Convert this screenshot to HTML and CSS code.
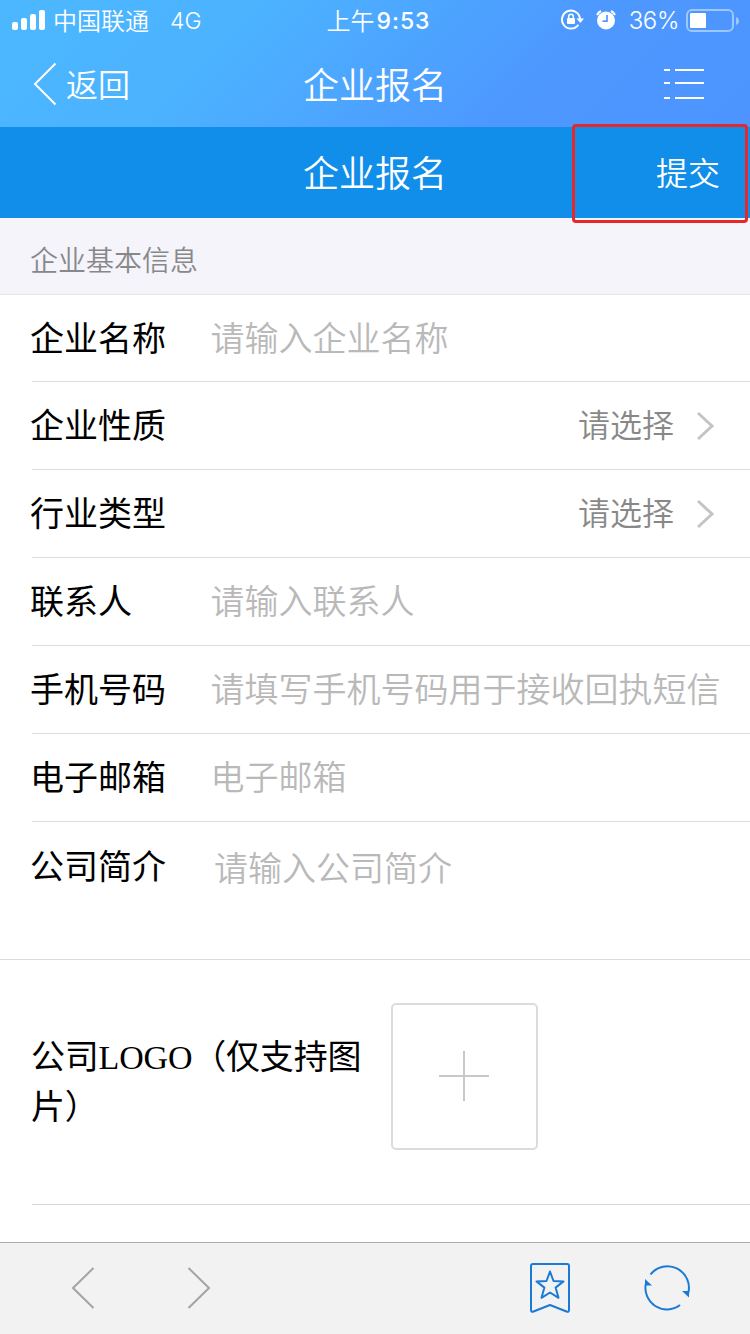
FILE: index.html
```html
<!DOCTYPE html>
<html lang="zh-CN">
<head>
<meta charset="utf-8">
<title>企业报名</title>
<link rel="stylesheet" href="styles.css">
</head>
<body>
<div class="screen">
  <header class="top">
    <div class="status">
      <div class="status-left">
        <svg class="signal" width="34" height="22" viewBox="0 0 34 22" fill="#fff"><rect x="0" y="12" width="6" height="8" rx="2"/><rect x="9" y="8" width="6" height="12" rx="2"/><rect x="18" y="4" width="6" height="16" rx="2"/><rect x="27" y="0" width="6" height="20" rx="2"/></svg>
        <span class="carrier">中国联通</span>
        <span class="network">4G</span>
      </div>
      <div class="clock"><span class="period">上午</span><span class="digits">9:53</span></div>
      <div class="status-right">
        <svg class="lock" width="24" height="22" viewBox="0 0 24 22" fill="none" stroke="#fff"><path d="M17.400 15.700A9 9 0 1 1 19 10.500" stroke-width="2"/><path d="M15.500 9.500h7.500l-3.700 4.500z" fill="#fff" stroke="none"/><rect x="6" y="9" width="8" height="6" rx="1" fill="#fff" stroke="none"/><path d="M7.700 9V7.500a2.300 2.300 0 0 1 4.600 0V9" stroke-width="1.500"/></svg>
        <svg class="alarm" width="20" height="20" viewBox="0 0 20 20"><circle cx="10" cy="10.500" r="9" fill="#fff"/><path d="M1 5A9 9 0 0 1 5 1M15 1a9 9 0 0 1 4 4" stroke="#fff" stroke-width="2" fill="none"/><path d="M11 5v6.200H6.500" stroke="#4d9bff" stroke-width="1.700" fill="none"/></svg>
        <span class="percent">36%</span>
        <svg width="53" height="24" viewBox="0 0 53 24"><rect x="1" y="1" width="46" height="21" rx="5" fill="none" stroke="#9cc8ff" stroke-width="2"/><rect x="4" y="4" width="16" height="15" rx="1" fill="#fff"/><path d="M50 8q3 1.200 3 4t-3 4z" fill="#9cc8ff"/></svg>
      </div>
    </div>
    <nav class="nav">
      <div class="back">
        <svg width="24" height="44" viewBox="0 0 24 44" fill="none" stroke="#fff" stroke-width="2"><path d="M22.500 1.500 2 22l20.500 20.500"/></svg>
        <span class="back-text">返回</span>
      </div>
      <h1 class="title">企业报名</h1>
      <svg class="menu" width="42" height="32" viewBox="0 0 42 32" fill="#fff"><path d="M1 1h6v2H1zM12 1h29v2H12zM1 14h6v2H1zM12 14h29v2H12zM1 29h6v2H1zM12 29h29v2H12z"/></svg>
    </nav>
  </header>
  <div class="subbar">
    <h2 class="title">企业报名</h2>
    <div class="submit">提交</div>
  </div>
  <div class="section">企业基本信息</div>
  <main class="form">
    <div class="row first"><span class="label">企业名称</span><span class="hint">请输入企业名称</span></div>
    <div class="row"><span class="label">企业性质</span><span class="choice">请选择</span><svg class="chevron" width="20" height="30" viewBox="0 0 20 30"><path d="M2 2l14 13L2 28"/></svg></div>
    <div class="row"><span class="label">行业类型</span><span class="choice">请选择</span><svg class="chevron" width="20" height="30" viewBox="0 0 20 30"><path d="M2 2l14 13L2 28"/></svg></div>
    <div class="row"><span class="label">联系人</span><span class="hint">请输入联系人</span></div>
    <div class="row"><span class="label">手机号码</span><span class="hint">请填写手机号码用于接收回执短信</span></div>
    <div class="row"><span class="label">电子邮箱</span><span class="hint">电子邮箱</span></div>
    <div class="row intro"><span class="label">公司简介</span><span class="hint">请输入公司简介</span></div>
    <div class="logo-row">
      <div class="logo-label">公司LOGO（仅支持图片）</div>
      <div class="upload"><svg width="50" height="50" viewBox="0 0 50 50"><path d="M25 0v50M0 25h50" stroke="#c8c8c8" stroke-width="2"/></svg></div>
    </div>
  </main>
  <footer class="toolbar">
    <svg class="prev" width="24" height="42" viewBox="0 0 24 42"><path d="M22.500 1 2 21l20.500 20"/></svg>
    <svg class="next" width="24" height="42" viewBox="0 0 24 42"><path d="M1.500 1 22 21 1.500 41"/></svg>
    <svg class="bookmark" width="42" height="52" viewBox="0 0 42 52"><path d="M4 2h34q2 0 2 2v44q0 2.500-2.500 1.500L21 43 4.500 49.500Q2 50.500 2 48V4q0-2 2-2z"/><path d="M21 9.500l3.500 9.500 10 .4-7.900 6.200 2.900 10.200L21 30.500l-8.500 5.300 2.900-10.200-7.900-6.200 10-.4z"/></svg>
    <svg class="reload" width="48" height="48" viewBox="0 0 48 48"><path d="M7.500 10.500A21.500 21.500 0 0 1 45 30M37 41A21.500 21.500 0 0 1 3 19"/><path class="tip" d="M39 27h7v6.500zM2 15v6.500h7z"/></svg>
  </footer>
</div>
</body>
</html>
```
FILE: styles.css
```css
* { box-sizing: border-box; }
body {
  margin: 0;
  background: #fff;
  font-family: "Noto Sans CJK SC", sans-serif;
}
svg { display: block; flex: none; }
.screen {
  width: 750px;
  height: 1334px;
  display: flex;
  flex-direction: column;
  overflow: hidden;
}
.top {
  height: 127px;
  flex: none;
  color: #fff;
  background: linear-gradient(135deg, #4cb7ff 0%, #4cb3ff 30%, #4d98ff 70%, #4d94ff 100%);
}
.status {
  height: 41px;
  display: grid;
  grid-template-columns: 1fr auto 1fr;
  align-items: center;
  padding: 0 11px 0 12px;
  font-size: 24px;
  line-height: 40px;
  font-weight: 350;
}
.status-left, .status-right, .clock, .back { display: flex; align-items: center; }
.carrier { margin: -2px 0 0 7px; }
.network { margin-left: 21px; font-family: Inter, sans-serif; font-size: 23px; font-weight: 350; }
.clock { font-weight: 350; margin-left: 6px; }
.period { margin-top: -2px; }
.digits { font-family: Inter, sans-serif; font-weight: 500; font-size: 23px; letter-spacing: 1px; margin-left: 2px; }
.status-right { justify-content: flex-end; }
.lock { margin-top: -1px; }
.alarm { margin-left: 11px; margin-top: -2px; }
.percent { margin: 0 7px 0 13px; font-family: Inter, sans-serif; font-size: 24px; letter-spacing: -0.4px; font-weight: 350; }
.nav {
  height: 86px;
  display: grid;
  grid-template-columns: 1fr auto 1fr;
  align-items: center;
  padding: 0 45px 0 33px;
}
.back { font-size: 32px; font-weight: 350; gap: 9px; }
.back-text { margin-top: -3px; }
.title { margin: -3px 0 0; font-size: 36px; font-weight: 350; line-height: 52px; }
.nav .title { margin-left: 12px; }
.menu { justify-self: end; }
.subbar {
  height: 91px;
  flex: none;
  display: grid;
  grid-template-columns: 1fr auto 1fr;
  align-items: center;
  background: #118eea;
  color: #fff;
}
.subbar .title { grid-column: 2; }
.submit {
  justify-self: end;
  display: flex;
  align-items: center;
  justify-content: flex-end;
  width: 176px;
  height: 99px;
  margin: -3px 2px -5px 0;
  padding: 0 25px 6px 0;
  border: 3px solid #e62828;
  border-radius: 4px;
  font-size: 32px;
  font-weight: 350;
  position: relative;
  z-index: 1;
}
.section {
  height: 77px;
  flex: none;
  padding: 7px 30px 0;
  border-bottom: 1px solid #e6e6e9;
  background: #f4f4fa;
  color: #88888b;
  font-size: 28px;
  font-weight: 350;
  line-height: 68px;
}
.form { flex: 1; }
.row {
  height: 88px;
  margin-left: 32px;
  padding-bottom: 3px;
  display: flex;
  align-items: center;
  border-bottom: 1px solid #dcdcdd;
  font-size: 34px;
  line-height: 50px;
}
.first { height: 87px; }
.label { width: 181px; margin-left: -2px; color: #000; }
.hint { margin-left: -0.5px; color: #b9b9b9; font-weight: 350; }
.choice { margin: -2px 0 0 auto; color: #888; font-size: 32px; font-weight: 350; }
.chevron { margin: 4px 34px 0 22px; fill: none; stroke: #c4c4c7; stroke-width: 3; }
.intro {
  height: 138px;
  margin-left: 0;
  padding: 18px 0 0 32px;
  align-items: flex-start;
}
.intro .hint { margin: 2px 0 0 3px; }
.logo-row {
  height: 245px;
  margin-left: 32px;
  display: flex;
  align-items: center;
  border-bottom: 1px solid #d6d6d6;
}
.logo-label {
  width: 340px;
  margin: 2px 20px 0 -1px;
  font-family: "Liberation Serif", "Noto Sans CJK SC", serif;
  font-size: 34px;
  line-height: 50px;
  letter-spacing: -0.2px;
}
.upload {
  width: 147px;
  height: 147px;
  display: grid;
  place-items: center;
  margin-top: -12px;
  padding-right: 1px;
  border: 2px solid #dcdcdc;
  border-radius: 5px;
}
.toolbar {
  height: 92px;
  flex: none;
  display: flex;
  align-items: center;
  padding: 0 0 2px 71px;
  border-top: 1px solid #adadad;
  background: #f2f2f2;
  fill: none;
}
.prev, .next { stroke: #a3a3a3; stroke-width: 2; }
.next { margin-left: 92px; }
.bookmark { margin-left: 318px; stroke: #1b7ad6; stroke-width: 2; stroke-linejoin: round; }
.reload { margin-left: 72px; stroke: #1b7ad6; stroke-width: 2; }
.tip { fill: #1b7ad6; stroke: none; }
```
